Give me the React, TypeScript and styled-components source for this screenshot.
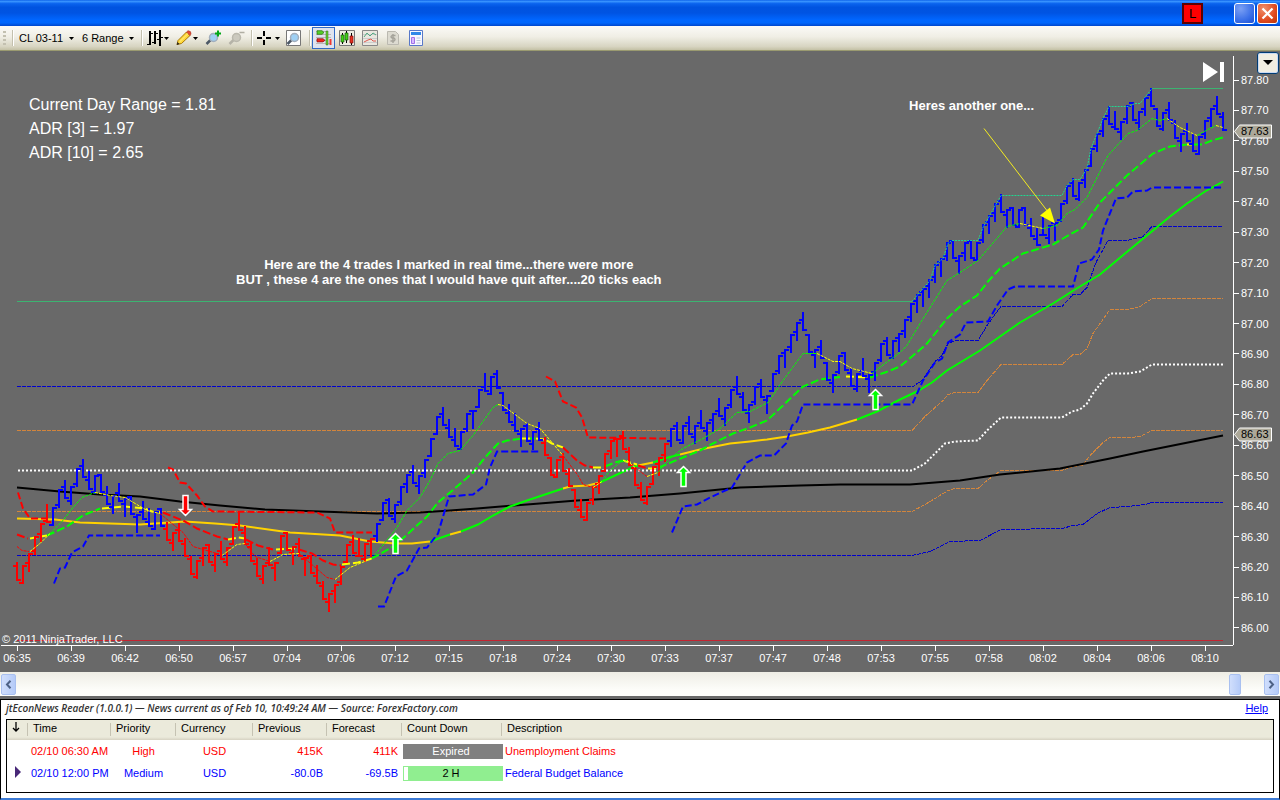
import React from 'react';
import styled, { createGlobalStyle } from 'styled-components';

const Global = createGlobalStyle`
  * { box-sizing: border-box; }
  body { margin: 0; background: #696969; font-family: 'Liberation Sans', Arial, sans-serif; font-size: 11px; color: #000; }
  button { font: inherit; padding: 0; margin: 0; border: 0; background: none; color: inherit; }
`;

const Page = styled.div`
  min-height: 100vh;
  display: flex;
  flex-direction: column;
  background: #696969;
`;

const TitleBar = styled.header`
  height: 26px;
  display: flex;
  align-items: center;
  justify-content: flex-end;
  gap: 2px;
  padding: 0 2px;
  background: linear-gradient(#0a5fe8 0%, #3a95ff 5%, #0a63ee 14%, #0053e0 28%, #0054e3 50%, #0066ff 76%, #0066fc 88%, #0046cc 100%);
`;

const LinkBadge = styled.button`
  width: 21px;
  height: 21px;
  margin-right: 29px;
  background: #ff0000;
  border: 2px solid #5c0000;
  font-size: 13px;
  line-height: 17px;
`;

const WindowButton = styled.button<{ $close?: boolean }>`
  width: 21px;
  height: 21px;
  display: flex;
  align-items: center;
  justify-content: center;
  border: 1px solid #fff;
  border-radius: 3px;
  background: ${(p) => (p.$close
    ? 'radial-gradient(circle at 30% 25%, #f0906c, #e04a20 60%, #b83408)'
    : 'radial-gradient(circle at 30% 25%, #7ba0f4, #3a6fe8 60%, #1c4fd0)')};
`;

const Toolbar = styled.div`
  height: 25px;
  display: flex;
  align-items: center;
  padding: 0 4px 0 3px;
  background: linear-gradient(#fbfaf7, #f0eee5 45%, #d8d5c2 85%, #c4c1a6);
  border-bottom: 1px solid #9a9a70;
`;

const Grip = styled.span`
  width: 3px;
  height: 15px;
  margin-right: 6px;
  background: repeating-linear-gradient(#c3c0b0 0 2px, transparent 2px 4px);
`;

const Separator = styled.span<{ $gap: number }>`
  width: 2px;
  height: 16px;
  margin: 0 ${(p) => p.$gap}px;
  background: linear-gradient(90deg, #c3c0ae 50%, #fff 50%);
`;

const Gap = styled.span<{ $w: number }>`
  width: ${(p) => p.$w}px;
`;

const DropButton = styled.button<{ $w: number }>`
  width: ${(p) => p.$w}px;
  height: 20px;
  display: flex;
  align-items: center;
  justify-content: space-between;
  white-space: nowrap;
`;

const Label = styled.span`
  padding-left: 5px;
`;

const ToolButton = styled.button<{ $active?: boolean }>`
  width: 23px;
  height: 22px;
  display: flex;
  align-items: center;
  justify-content: center;
  ${(p) => p.$active && 'background: #dfe3ee; box-shadow: inset 0 0 0 1px #316ac5;'}
`;

const Chart = styled.main`
  flex: 1;
  min-height: 621px;
  position: relative;
  display: grid;
  grid-template-columns: minmax(0, 1fr) 47px;
  grid-template-rows: minmax(0, 1fr) 27px;
  color: #fff;
`;

const Plot = styled.div`
  position: relative;
  min-width: 0;
  svg { display: block; width: 100%; height: 100%; }
`;

const PriceAxis = styled.div`
  position: relative;
  display: flex;
  flex-direction: column;
  justify-content: space-between;
  padding: 23px 0 11px;
`;

const AxisLine = styled.i`
  position: absolute;
  left: 0;
  top: 5px;
  bottom: 0;
  width: 1px;
  background: #fff;
`;

const Price = styled.span`
  height: 12px;
  line-height: 12px;
  display: flex;
  align-items: center;
  gap: 2px;
  &::before { content: ''; width: 6px; height: 1px; background: #fff; }
`;

const PriceTag = styled.div<{ $y: string }>`
  position: absolute;
  left: 1px;
  top: ${(p) => p.$y};
  width: 38px;
  height: 15px;
  line-height: 15px;
  padding-left: 7px;
  color: #000;
  svg { position: absolute; left: 0; top: 0; }
  span { position: relative; }
`;

const TimeAxis = styled.div`
  display: flex;
  justify-content: space-between;
  padding: 0 14px 0 3px;
  background: linear-gradient(#fff, #fff) 1px 0 / 100% 1px no-repeat;
`;

const Time = styled.span`
  width: 28px;
  display: flex;
  flex-direction: column;
  align-items: center;
  line-height: 14px;
  &::before { content: ''; width: 1px; height: 6px; background: #fff; }
`;

const RangeInfo = styled.div`
  position: absolute;
  left: 29px;
  top: 42px;
  font-size: 16px;
  line-height: 24px;
`;

const Note = styled.div<{ $x: string; $y: number }>`
  position: absolute;
  left: ${(p) => p.$x};
  top: ${(p) => p.$y}px;
  transform: translateX(-50%);
  text-align: center;
  white-space: nowrap;
  font-size: 13px;
  font-weight: bold;
  line-height: 15px;
`;

const Copyright = styled.div`
  position: absolute;
  left: 2px;
  bottom: 0;
  line-height: 11px;
`;

const EndButton = styled.button`
  position: absolute;
  right: 9px;
  top: 11px;
  width: 21px;
  height: 20px;
`;

const MenuButton = styled.button`
  position: absolute;
  right: 1px;
  top: 1px;
  width: 22px;
  height: 22px;
  display: flex;
  justify-content: center;
  padding-top: 7px;
  background: #f1eee2;
  border: 1px solid #003c74;
  border-radius: 3px;
  box-shadow: inset 0 0 0 1px #c9d9f2;
`;

const Scroll = styled.div`
  height: 24px;
  display: flex;
  align-items: center;
  justify-content: space-between;
  padding: 1px 1px 0;
  background: linear-gradient(#eeede5, #fefefb 80%);
`;

const ThumbGroup = styled.div`
  display: flex;
`;

const ScrollButton = styled.button<{ $w: number; $gap?: number }>`
  width: ${(p) => p.$w}px;
  height: 21px;
  margin-right: ${(p) => p.$gap ?? 0}px;
  display: flex;
  align-items: center;
  justify-content: center;
  border: 1px solid #a9c0f0;
  border-radius: 2px;
  background: linear-gradient(90deg, #d0defc, #b5cbf8);
`;

const News = styled.section`
  margin-top: 3px;
  border: 1px solid #000;
  border-bottom: 2px solid #3c7ad4;
  height: 101px;
  padding: 0 5px 5px;
  background: #fff;
  display: flex;
  flex-direction: column;
`;

const NewsHead = styled.div`
  height: 19px;
  display: flex;
  justify-content: space-between;
  padding-right: 6px;
  line-height: 17px;
  em { font: italic 600 10px/16px 'Open Sans', 'Noto Sans', sans-serif; white-space: nowrap; color: #333; }
  a { color: #00f; font-size: 11px; }
`;

const TableFrame = styled.div`
  flex: 1;
  border: 1px solid #000;
`;

const Table = styled.table`
  width: 100%;
  table-layout: fixed;
  border-collapse: collapse;
`;

const Th = styled.th<{ $w?: number }>`
  width: ${(p) => (p.$w ? `${p.$w}px` : 'auto')};
  height: 20px;
  padding: 0 0 4px 5px;
  text-align: left;
  font-weight: normal;
  white-space: nowrap;
  background: linear-gradient(#c5c2b2, #c5c2b2) 100% 3px / 1px 13px no-repeat, linear-gradient(#ebeadb 85%, #d6d2c2);
  &:last-child { background: linear-gradient(#ebeadb 85%, #d6d2c2); }
`;

const Row = styled.tr<{ $color: string }>`
  height: 22px;
  color: ${(p) => p.$color};
`;

const Td = styled.td<{ $align?: string; $pad?: string }>`
  padding: ${(p) => p.$pad ?? '0'};
  text-align: ${(p) => p.$align ?? 'left'};
  white-space: nowrap;
`;

const Count = styled.div<{ $bg: string; $color: string; $notch?: boolean }>`
  width: 100px;
  height: 15px;
  line-height: 15px;
  text-align: center;
  padding-right: 4px;
  color: ${(p) => p.$color};
  background: ${(p) => (p.$notch ? 'linear-gradient(#fff, #fff) 1px 1px / 4px 13px no-repeat, ' : '')}${(p) => p.$bg};
`;

const Caret = () => (
  <svg width="5" height="3" viewBox="0 0 5 3" aria-hidden="true"><path d="M0 0h5L2.500 3z" fill="#000" /></svg>
);

const Lens = ({ off }: { off?: boolean }) => (
  <>
    <path d="M6 9.500L1.500 14" stroke={off ? '#b5b3a8' : '#4c5866'} strokeWidth="2.500" />
    <circle cx="8.500" cy="7.500" r="4" fill={off ? '#cbc9be' : '#9fd0f4'} stroke={off ? '#bab8ad' : '#a3aebc'} strokeWidth="1.500" />
  </>
);

// Bars are six pixels apart. Each entry is the top of a bar and whether it closed up or down.
const BARS = (
  '562D 565U 553U 536U 523U 504D 507U 489U 480D 486U 468U 459D 471D 475U 474D 486D 495U 483D 498U 496D 514U 501D 508D 511U 508D ' +
  '522D 532U 523D 538D 556D 560U 547U 544D 553U 541D 547U 526U 512D 526D 543D 558D 565U 547D 562U 535U 532D 546U 538D 557U 555D ' +
  '565D 581D 593U 584U 566U 544U 535D 538D 543U 538U 523U 502U 498D 504U 486U 474U 465D 475U 459U 438U 416U 407D 419D 428D 431U ' +
  '413U 410U 389U 373D 376U 370D 392D 404D 413D 428U 423D 431U 422D 437D 457D 459U 453D 468D 489D 499D 502U 486U 475U 453U 440U ' +
  '438U 431D 447D 467D 482D 486U 466U 457U 443U 428U 422D 425U 416D 425U 410D 422U 413U 398D 407U 389U 376D 392D 404U 386U 379D ' +
  '395U 373U 355U 349U 334U 322U 312D 334D 349U 340D 362D 374U 355U 352D 368D 373U 358D 374U 362U 343U 337D 340U 333U 319U 303U ' +
  '294U 288U 279U 264U 258U 242U 240D 255U 242U 240D 242U 224U 215U 203U 194D 209U 207D 209U 207D 218D 227D 217D 225U 222U 203U ' +
  '185U 178D 182U 169U 148U 133U 118U 106D 111D 121U 105U 102D 111U 97U 88D 108D 112U 102D 120D 133U 123D 133D 136U 120U 108U 96D 112D'
).split(' ').map((s) => ({ top: parseInt(s, 10), up: s.endsWith('U') }));

const closeOf = (b: { top: number; up: boolean }) => (b.up ? b.top + 1 : b.top + 18);

function barPath(from: number, to: number) {
  let d = '';
  for (let k = from; k <= to; k++) {
    const b = BARS[k];
    const x = 17 + 6 * k;
    const close = closeOf(b);
    const prev = k > 0 ? BARS[k - 1] : null;
    const guess = prev ? closeOf(prev) + (prev.up ? -3 : 3) : b.top + 4;
    const open = Math.min(b.top + 18, Math.max(b.top + 1, guess));
    d += `M${x} ${b.top}V${b.top + 19}M${x - 4} ${open}H${x}M${x} ${close}H${x + 4}`;
  }
  return d;
}

const RED = '#ff0000';
const BLUE = '#0000ff';
const LIME = '#00ff00';
const YEL = '#ffff00';
const GOLD = '#ffd200';

type Seg = [string, string];

const SLOW: Seg[] = [
  [GOLD, '17,518 55,519 80,522 140,524 185,521 215,523 240,525 290,532 340,535 370,541 395,543 412,543 430,541'],
  [LIME, '430,541 450,534'],
  [GOLD, '450,534 461,531'],
  [LIME, '461,531 478,524 493,515 510,506 527,500 545,494 563,488'],
  [GOLD, '563,488 570,486 588,485 600,482'],
  [LIME, '600,482 615,475 630,468 638,465'],
  [GOLD, '638,465 653,462'],
  [LIME, '653,462 668,457 680,454'],
  [GOLD, '680,454 700,449 715,446 730,443 750,441 767,439 787,436 808,432 830,427 857,419'],
  [LIME, '857,419 877,411 900,399 917,391 932,382 947,370 980,350 1000,336 1020,322 1053,303 1075,289 1100,274 1125,253 1153,230 1170,216 1187,203 1205,191 1223,181'],
];

const MID: Seg[] = [
  [RED, '17,534 28,538'],
  [YEL, '30,538 47,535'],
  [LIME, '47,535 67,526 83,515 100,508'],
  [YEL, '102,508 125,506 145,508 152,511 162,512'],
  [RED, '163,512 183,520 197,528 217,536 228,539'],
  [YEL, '228,539 238,537 245,538'],
  [RED, '246,539 258,545 273,549'],
  [YEL, '276,549 297,548'],
  [RED, '299,549 312,553 323,560 333,564 341,565'],
  [YEL, '342,564 358,562 372,558'],
  [LIME, '372,558 395,545 418,524 427,516 438,502 450,492 473,472 485,457 498,443 507,440 522,438'],
  [YEL, '522,438 530,438'],
  [LIME, '530,438 535,438'],
  [YEL, '536,438 545,439 552,443 563,447'],
  [RED, '563,447 577,460 585,465 593,467'],
  [YEL, '593,467 604,467'],
  [LIME, '605,466 615,462 623,460'],
  [YEL, '623,460 637,464'],
  [RED, '638,465 648,468'],
  [YEL, '648,468 658,468'],
  [LIME, '659,467 683,457 700,450 713,443 733,433 750,427 767,420 783,405 803,386 820,379 843,376'],
  [YEL, '846,376 870,377'],
  [LIME, '870,377 885,372 900,366 912,356 927,343 947,318 960,306 977,295 988,281 1000,268 1023,253 1053,244 1070,234 1083,227 1100,202 1112,190 1127,175 1153,153 1170,146 1187,144'],
  [YEL, '1187,144 1194,144'],
  [LIME, '1194,144 1202,144 1212,140 1223,137'],
];

const FAST: Seg[] = [
  [RED, '17,546 22,550 29,551'],
  [YEL, '30,551 40,543 50,533'],
  [LIME, '50,533 63,520 73,507 82,497 95,492'],
  [YEL, '95,492 110,495 125,497 147,510 160,513'],
  [RED, '160,513 172,523 183,532 193,546 217,553'],
  [YEL, '222,555 237,544 245,543'],
  [RED, '245,543 255,556 270,561'],
  [YEL, '270,561 283,554 299,553'],
  [RED, '299,553 313,565 327,577 335,579'],
  [YEL, '335,579 350,567 372,558'],
  [LIME, '372,558 385,542 397,527 407,510 420,497 430,480 438,463 448,453 460,450 473,435 493,407 498,404'],
  [YEL, '498,404 503,405 527,423 540,428 552,442 563,455'],
  [RED, '563,455 578,475 583,484 593,487'],
  [YEL, '593,487 602,481'],
  [LIME, '602,481 610,470 620,462 627,460'],
  [YEL, '627,460 635,467'],
  [RED, '635,467 647,476'],
  [YEL, '647,476 658,472'],
  [LIME, '658,472 670,458 683,448 703,438 720,428 737,412 750,411 768,402 783,380 803,353 817,353'],
  [YEL, '817,353 833,361 840,361 852,368 872,373'],
  [LIME, '872,373 885,363 900,352 907,345 920,323 947,280 960,272 978,260 1007,226 1020,223'],
  [YEL, '1020,223 1043,228'],
  [LIME, '1043,228 1057,225 1067,213 1075,209 1087,197 1108,155 1128,133 1137,130 1152,118 1160,120 1167,118'],
  [YEL, '1167,118 1180,127 1197,135'],
  [LIME, '1197,135 1208,129 1216,125'],
  [YEL, '1216,125 1223,127'],
];

const STOPS: Seg[] = [
  [RED, '18,492 23,508 30,518 47,518'],
  [RED, '168,467 173,469 180,482 186,483 197,495 205,506 213,511 317,512 330,518 335,532 372,532'],
  [RED, '546,376 555,381 563,401 576,407 582,417 588,437 666,438'],
  [BLUE, '54,583 60,568 65,567 72,552 83,546 89,535 160,535'],
  [BLUE, '378,606 384,606 396,576 407,570 419,548 427,547 438,533 449,496 473,494 486,484 490,467 497,451 539,451'],
  [BLUE, '672,532 683,506 697,504 710,497 732,487 747,462 760,455 774,455 786,443 792,425 797,421 803,404 912,404 918,391 923,380 935,362 942,358 948,342 960,334 966,322 988,321 997,305 1008,289 1015,286 1073,286 1079,263 1092,259 1099,249 1103,230 1116,198 1127,197 1133,191 1147,190 1152,187 1223,187'],
];

const PIVOTS: Seg[] = [
  ['#0000cd', '17,386 913,386 923,379 935,361 942,355 948,343 955,340 978,340 987,325 1001,306 1062,306 1073,294 1080,294 1087,287 1096,262 1108,240 1128,240 1133,238 1142,237 1152,226 1223,226'],
  ['#d2853c', '17,430 912,430 925,416 943,400 948,394 955,392 978,392 987,380 1001,364 1062,364 1073,354 1080,354 1087,348 1093,333 1100,323 1110,309 1128,309 1140,306 1152,298 1223,298'],
  ['#d2853c', '17,511 912,511 925,504 948,490 955,488 978,488 987,480 1001,470 1062,470 1073,466 1082,465 1092,453 1103,442 1110,437 1130,437 1140,436 1152,430 1223,430'],
  ['#0000cd', '17,555 912,555 930,551 950,541 980,540 1001,529 1062,528 1073,525 1083,524 1097,513 1110,507 1128,506 1145,504 1152,502 1223,502'],
];

const WHITE_DOTS = '18,470 912,470 925,463 935,453 945,443 955,441 978,440 987,430 1001,417 1062,417 1072,411 1080,409 1087,403 1093,393 1103,380 1110,373 1128,373 1140,371 1152,364 1223,364';
const TREND = '17,487 60,491 100,494 140,496 180,501 220,505 265,509 320,511 377,513 420,512 450,510 477,508 527,504 577,500 630,497 680,493 740,487 800,485 840,484 910,484 960,480 1000,474 1060,468 1110,458 1143,451 1223,435';
const TOP_DOTS = '912,301 917,295 930,280 935,265 943,258 948,243 952,240 978,240 983,227 997,202 1001,195 1062,195 1067,185 1073,179 1080,179 1087,168 1091,148 1103,118 1109,106 1128,106 1135,103 1140,103 1152,88';

const Lines = ({ segs, width, dash }: { segs: Seg[]; width: number; dash?: string }) => (
  <g fill="none" strokeWidth={width} strokeDasharray={dash}>
    {segs.map(([color, points], i) => <polyline key={i} stroke={color} points={points} />)}
  </g>
);

const ARROW = 'M0 0L6 6H2.500V20H-2.500V6H-6Z';

const ChartDrawing = () => (
  <svg viewBox="0 51 1233 594" preserveAspectRatio="none" role="img" aria-label="CL 03-11 price chart">
    <g transform="translate(0 .5)">
      <g shapeRendering="crispEdges">
        <Lines segs={PIVOTS} width={1} dash="4 1" />
        <path d="M17 301H912M1152 88H1223" stroke="#3cb371" />
        <path d="M17 640H1223" stroke="#c42430" />
      </g>
      <polyline points={TREND} fill="none" stroke="#000" strokeWidth="2" />
      <Lines segs={SLOW} width={2} />
      <Lines segs={MID} width={2} dash="8 3" />
      <Lines segs={STOPS} width={2} dash="7 3" />
      <polyline points={WHITE_DOTS} fill="none" stroke="#fff" strokeWidth="2" strokeDasharray="2 2" />
    </g>
    <g fill="none" strokeWidth="2" shapeRendering="crispEdges">
      <path d={barPath(0, 5)} stroke={RED} />
      <path d={barPath(6, 24)} stroke={BLUE} />
      <path d={barPath(25, 59)} stroke={RED} />
      <path d={barPath(60, 87)} stroke={BLUE} />
      <path d={barPath(88, 108)} stroke={RED} />
      <path d={barPath(109, 201)} stroke={BLUE} />
    </g>
    <g transform="translate(0 .5)">
      <Lines segs={FAST} width={1} dash="3 1" />
      <polyline points={TOP_DOTS} fill="none" stroke="#20d890" strokeDasharray="2 1" />
      <path d="M984 128L1050 214" stroke="#f4ec20" />
      <path d="M1055 223L1040 215L1050 207Z" fill="#ff0" />
    </g>
    <g stroke="#fff" strokeWidth="1.500">
      <path d={ARROW} transform="translate(395.500 533.500)" fill={LIME} />
      <path d={ARROW} transform="translate(683.500 466.500)" fill={LIME} />
      <path d={ARROW} transform="translate(875.500 389.500)" fill={LIME} />
      <path d={ARROW} transform="translate(185.500 515.500) scale(1 -1)" fill={RED} />
    </g>
  </svg>
);

const PRICES = Array.from({ length: 19 }, (_, i) => ((8780 - i * 10) / 100).toFixed(2));
const TIMES = '06:35 06:39 06:42 06:50 06:57 07:04 07:06 07:12 07:15 07:18 07:24 07:30 07:33 07:37 07:47 07:48 07:53 07:55 07:58 08:02 08:04 08:06 08:10'.split(' ');

const Tag = ({ y, value }: { y: string; value: string }) => (
  <PriceTag $y={y}>
    <svg width="38" height="15" viewBox="0 0 38 15" aria-hidden="true">
      <path d="M.5 7.500L5.500 1H37.500V14H5.500Z" fill="#aca899" stroke="#fff" />
    </svg>
    <span>{value}</span>
  </PriceTag>
);

export default function App() {
  return (
    <Page>
      <Global />
      <TitleBar>
        <LinkBadge>L</LinkBadge>
        <WindowButton aria-label="Maximize" />
        <WindowButton $close aria-label="Close">
          <svg width="13" height="13" viewBox="0 0 13 13"><path d="M1.500 1.500l10 10M11.500 1.500l-10 10" stroke="#fff" strokeWidth="2.200" /></svg>
        </WindowButton>
      </TitleBar>

      <Toolbar role="toolbar">
        <Grip />
        <Separator $gap={0} />
        <DropButton $w={60}><Label>CL 03-11</Label><Caret /></DropButton>
        <Gap $w={3} />
        <DropButton $w={57}><Label>6 Range</Label><Caret /></DropButton>
        <Gap $w={4} />
        <Separator $gap={3} />
        <DropButton $w={23} aria-label="Bar style">
          <svg width="17" height="16" viewBox="0 0 17 16" shapeRendering="crispEdges">
            <path d="M4 1v14M9 1v13M14 0v16" stroke="#000" strokeWidth="2" fill="none" />
            <path d="M1 14h3M4 3h3M6 12h3M9 3h3M11 9h3M14 7h3" stroke="#000" strokeWidth="1" fill="none" />
          </svg>
          <Caret />
        </DropButton>
        <Gap $w={7} />
        <DropButton $w={22} aria-label="Drawing tools">
          <svg width="16" height="16" viewBox="0 0 16 16">
            <path d="M1 14.500L2 10.500L10.500 2L14 5.500L5.500 13.500Z" fill="#ffd83a" stroke="#a87808" />
            <path d="M10.500 2L12 .7Q15.500 1 15 4L14 5.500Z" fill="#e84830" stroke="#b04030" strokeWidth=".7" />
            <path d="M3.500 12L12 3.600" stroke="#fff08a" />
            <path d="M.7 15L1.500 12L3.500 14Z" fill="#222" />
          </svg>
          <Caret />
        </DropButton>
        <Gap $w={4} />
        <ToolButton aria-label="Zoom in">
          <svg width="17" height="16" viewBox="0 0 17 16"><Lens /><path d="M10 3.500h6M13 .5v6" stroke="#00a818" strokeWidth="2" /></svg>
        </ToolButton>
        <ToolButton aria-label="Zoom out">
          <svg width="17" height="16" viewBox="0 0 17 16"><Lens off /><path d="M11.500 2.500h5" stroke="#b0aea3" strokeWidth="1.500" /></svg>
        </ToolButton>
        <Separator $gap={3} />
        <DropButton $w={24} aria-label="Cursor">
          <svg width="15" height="16" viewBox="0 0 15 16" shapeRendering="crispEdges"><path d="M1 8h5M10 8h5M8 1v5M8 10v5" stroke="#000" strokeWidth="2" /></svg>
          <Caret />
        </DropButton>
        <Gap $w={2} />
        <ToolButton aria-label="Data box">
          <svg width="15" height="16" viewBox="0 0 15 16"><path d="M.5.5h14v15H.5z" fill="#fff" stroke="#777" /><Lens /></svg>
        </ToolButton>
        <Gap $w={3} />
        <Separator $gap={1} />
        <ToolButton $active aria-label="Chart trader">
          <svg width="16" height="16" viewBox="0 0 16 16">
            <path d="M0 1.500h10M0 4.500h15M0 7.500h15M0 10.500h10M0 13.500h15" stroke="#b8b8b8" />
            <path d="M1 .7h5l2 1.800l-2 1.800H1z" fill="#55cf28" stroke="#287010" strokeWidth=".7" />
            <path d="M1 8.700h6l2 1.600l-2 1.600H1z" fill="#ef2820" stroke="#8b1010" strokeWidth=".7" />
            <path d="M10 1h2v14h-2z" fill="#68d030" stroke="#306818" strokeWidth=".5" />
            <path d="M13.500 9h2v6h-2z" fill="#ef3830" />
          </svg>
        </ToolButton>
        <ToolButton aria-label="Candles">
          <svg width="16" height="16" viewBox="0 0 16 16">
            <path d="M.5.5h15v15H.5z" fill="#eeece2" stroke="#777" /><path d="M3.500 3v11M7.500 1v12M12.500 3v12" stroke="#000" />
            <path d="M2 5h3v7H2zM6 3h3v7H6z" fill="#42cf18" stroke="#175c08" strokeWidth=".7" /><path d="M11 6h3v7h-3z" fill="#e93020" stroke="#7c1010" strokeWidth=".7" />
          </svg>
        </ToolButton>
        <ToolButton aria-label="Indicators">
          <svg width="16" height="16" viewBox="0 0 16 16">
            <path d="M.5.5h15v15H.5z" fill="#e9e7df" stroke="#888" /><path d="M1 4.500h14M1 8.500h14M1 12.500h14" stroke="#ccc" />
            <path d="M2 7l3-4 3 3 3-3 3 2" stroke="#50a880" fill="none" /><path d="M2 12l4-2 3-1 2 2h3" stroke="#e05850" fill="none" />
          </svg>
        </ToolButton>
        <ToolButton aria-label="Strategies">
          <svg width="12" height="14" viewBox="0 0 12 14">
            <path d="M.5.5h8l3 3v10H.5z" fill="#dddbd1" stroke="#bbb9b0" /><path d="M8.500 4.500H5Q3 5.800 5 7H7Q9 8.500 7 10H3.500M6 3v9" stroke="#a5a39a" strokeWidth="1.400" fill="none" />
          </svg>
        </ToolButton>
        <ToolButton aria-label="Properties">
          <svg width="14" height="16" viewBox="0 0 14 16">
            <path d="M.5.5h13v15H.5z" fill="#f7f7ff" stroke="#5878c8" /><path d="M2 3.500h10" stroke="#3088e8" strokeWidth="3" />
            <path d="M2.500 7.500h3v6h-3z" fill="#d8b8ff" stroke="#a070e8" /><path d="M7.500 8h4M7.500 10.500h4M7.500 13h4" stroke="#b8c4dc" />
          </svg>
        </ToolButton>
      </Toolbar>

      <Chart>
        <Plot>
          <ChartDrawing />
          <RangeInfo>
            <div>Current Day Range = 1.81</div>
            <div>ADR [3] = 1.97</div>
            <div>ADR [10] = 2.65</div>
          </RangeInfo>
          <Note $x="36.400%" $y={206}>
            Here are the 4 trades I marked in real time...there were more<br />
            BUT , these 4 are the ones that I would have quit after....20 ticks each
          </Note>
          <Note $x="78.800%" $y={47}>Heres another one...</Note>
          <Copyright>© 2011 NinjaTrader, LLC</Copyright>
          <EndButton aria-label="Go to last bar">
            <svg viewBox="0 0 21 20"><path d="M0 0L15 10L0 20ZM17 0h4v20h-4z" fill="#fff" /></svg>
          </EndButton>
        </Plot>
        <PriceAxis>
          <AxisLine />
          {PRICES.map((p) => <Price key={p}>{p}</Price>)}
          <Tag y="73px" value="87.63" />
          <Tag y="376px" value="86.63" />
          <MenuButton aria-label="Chart menu">
            <svg width="10" height="5" viewBox="0 0 10 5"><path d="M0 0h10L5 5z" fill="#000" /></svg>
          </MenuButton>
        </PriceAxis>
        <TimeAxis>{TIMES.map((t) => <Time key={t}>{t}</Time>)}</TimeAxis>
      </Chart>

      <Scroll>
        <ScrollButton $w={15} aria-label="Scroll left">
          <svg width="7" height="9" viewBox="0 0 7 9"><path d="M5.500.8L2 4.500l3.500 3.700" stroke="#4d6185" strokeWidth="2" fill="none" /></svg>
        </ScrollButton>
        <ThumbGroup>
          <ScrollButton $w={12} $gap={23} aria-label="Scroll position" />
          <ScrollButton $w={15} aria-label="Scroll right">
            <svg width="7" height="9" viewBox="0 0 7 9"><path d="M1.500.8L5 4.500L1.500 8.200" stroke="#4d6185" strokeWidth="2" fill="none" /></svg>
          </ScrollButton>
        </ThumbGroup>
      </Scroll>

      <News>
        <NewsHead>
          <em>jtEconNews Reader (1.0.0.1) — News current as of Feb 10, 10:49:24 AM — Source: ForexFactory.com</em>
          <a href="#help">Help</a>
        </NewsHead>
        <TableFrame>
          <Table>
            <thead>
              <tr>
                <Th $w={21}>
                  <svg width="8" height="10" viewBox="0 0 8 10" aria-label="Sorted"><path d="M4 0v9M1 6l3 3 3-3" stroke="#000" strokeWidth="1.300" fill="none" /></svg>
                </Th>
                <Th $w={83}>Time</Th><Th $w={65}>Priority</Th><Th $w={77}>Currency</Th><Th $w={74}>Previous</Th>
                <Th $w={75}>Forecast</Th><Th $w={100}>Count Down</Th><Th>Description</Th>
              </tr>
            </thead>
            <tbody>
              <Row $color="#ff0000">
                <Td />
                <Td $pad="0 0 0 3px">02/10 06:30 AM</Td><Td $align="center">High</Td><Td $align="center">USD</Td>
                <Td $align="right" $pad="0 4px 0 0">415K</Td><Td $align="right" $pad="0 4px 0 0">411K</Td>
                <Td $pad="0 0 0 1px"><Count $bg="#808080" $color="#fff">Expired</Count></Td>
                <Td $pad="0 0 0 3px">Unemployment Claims</Td>
              </Row>
              <Row $color="#0000ff">
                <Td $pad="0 0 0 8px"><svg width="6" height="12" viewBox="0 0 6 12" aria-label="Next event"><path d="M0 0L6 6L0 12Z" fill="#482878" /></svg></Td>
                <Td $pad="0 0 0 3px">02/10 12:00 PM</Td><Td $align="center">Medium</Td><Td $align="center">USD</Td>
                <Td $align="right" $pad="0 4px 0 0">-80.0B</Td><Td $align="right" $pad="0 4px 0 0">-69.5B</Td>
                <Td $pad="0 0 0 1px"><Count $bg="#90ee90" $color="#000" $notch>2 H</Count></Td>
                <Td $pad="0 0 0 3px">Federal Budget Balance</Td>
              </Row>
            </tbody>
          </Table>
        </TableFrame>
      </News>
    </Page>
  );
}
